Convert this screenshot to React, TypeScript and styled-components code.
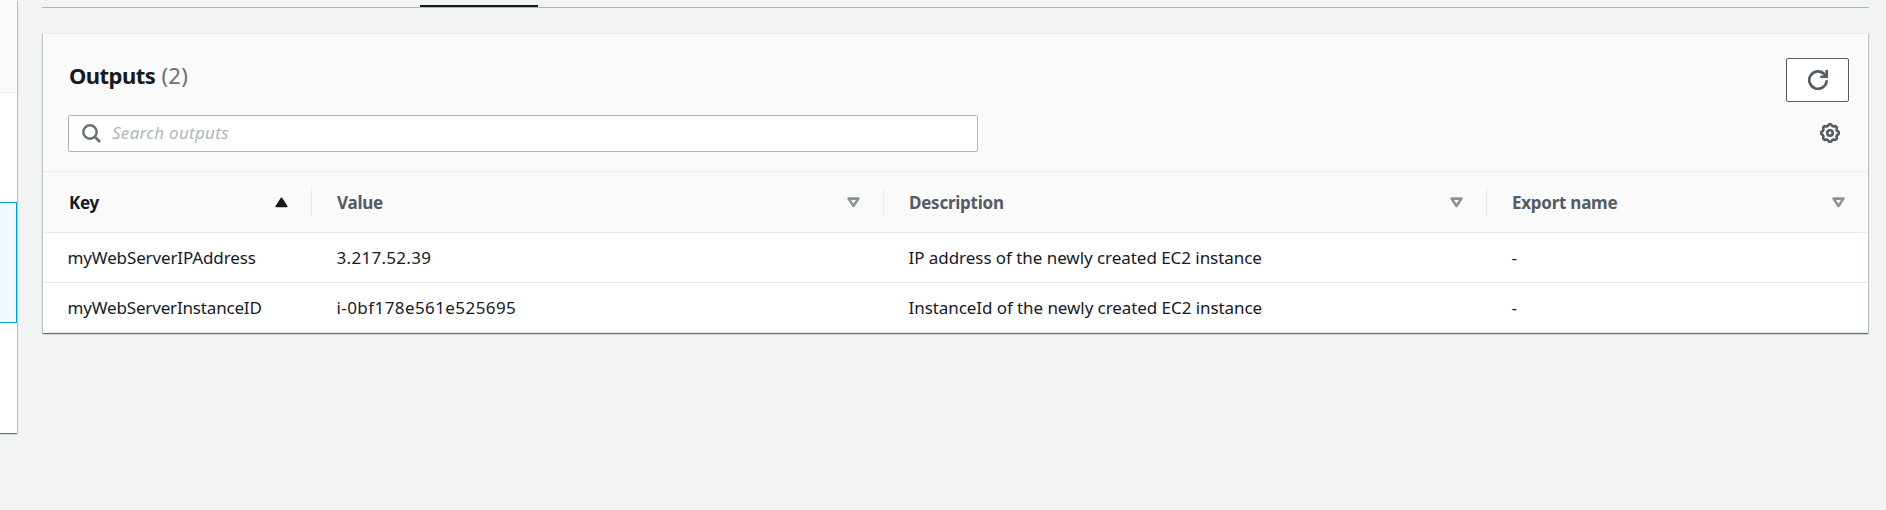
import React from 'react';
import styled, { createGlobalStyle, css } from 'styled-components';

const Global = createGlobalStyle`
  *, *::before, *::after { box-sizing: border-box; }
  body {
    margin: 0;
    background: #f2f3f3;
    color: #16191f;
    font-family: "Noto Sans", "Open Sans", sans-serif;
    font-size: 17px;
    overflow: hidden;
  }
`;

const panelShadow = css`
  box-shadow: 0 1px 1px 0 rgba(0, 28, 36, 0.4), 1px 1px 1px 0 rgba(0, 28, 36, 0.17),
    -1px 1px 1px 0 rgba(0, 28, 36, 0.17);
`;

const Page = styled.div`
  display: flex;
  height: 510px;
`;

const StackList = styled.aside`
  width: 17px;
  height: 433px;
  flex: none;
  background: #fff;
  ${panelShadow}
`;

const StackListHeader = styled.div`
  height: 93px;
  background: #fafafa;
  border-bottom: 1px solid #eaeded;
`;

const SelectedStack = styled.div`
  height: 121px;
  margin-top: 109px;
  background: #f1faff;
  border: 1px solid #00a1c9;
  border-left: 0;
`;

const Content = styled.main`
  width: 1827px;
  margin-left: 25px;
`;

const TabBar = styled.div`
  height: 8px;
  padding: 5px 0 0 378px;
  border-bottom: 1px solid #aab7b8;
`;

const ActiveTab = styled.div`
  width: 118px;
  height: 2px;
  background: #16191f;
`;

const Panel = styled.section`
  width: 1825px;
  margin: 25px 0 0 1px;
  background: #fff;
  border-top: 1px solid #eaeded;
  ${panelShadow}
`;

const PanelHeader = styled.header`
  display: flex;
  flex-direction: column;
  height: 137px;
  padding: 24px 19px 0 25px;
  background: #fafafa;
`;

const TitleRow = styled.div`
  display: flex;
  justify-content: space-between;
  height: 44px;
`;

const Title = styled.h2`
  margin: 2px 0 0 1px;
  font-size: 22px;
  line-height: 30px;
  font-weight: 700;
  letter-spacing: -0.55px;
`;

const Count = styled.span`
  margin-left: 1px;
  color: #687078;
  font-weight: 400;
  letter-spacing: 0.3px;
`;

const RefreshButton = styled.button`
  display: flex;
  align-items: center;
  justify-content: center;
  width: 63px;
  height: 44px;
  padding: 0 0 0 1px;
  color: #545b64;
  background: #fff;
  border: 1px solid #545b64;
  border-radius: 2px;
`;

const FilterRow = styled.div`
  display: flex;
  align-items: center;
  justify-content: space-between;
  margin-top: 13px;
  padding-right: 9px;
`;

const SearchBox = styled.label`
  display: flex;
  align-items: center;
  gap: 11px;
  width: 910px;
  height: 37px;
  padding-left: 13px;
  color: #687078;
  background: #fff;
  border: 1px solid #aab7b8;
  border-radius: 2px;
`;

const SearchInput = styled.input`
  flex: 1;
  padding: 0 0 2px;
  font: inherit;
  letter-spacing: 0.28px;
  border: 0;
  outline: 0;
  background: transparent;
  &::placeholder {
    color: #aab7b8;
    font-style: italic;
    opacity: 1;
  }
`;

const SettingsButton = styled.button`
  display: flex;
  padding: 0 0 1px;
  color: #545b64;
  background: none;
  border: 0;
`;

const columns = '269px 572px 603px 381px';

const HeadRow = styled.div`
  display: grid;
  grid-template-columns: ${columns};
  align-items: center;
  height: 62px;
  background: #fafafa;
  border-top: 1px solid #eaeded;
  border-bottom: 1px solid #eaeded;
`;

const HeadCell = styled.div<{ $active?: boolean; $last?: boolean }>`
  display: flex;
  align-items: center;
  justify-content: space-between;
  height: 30px;
  padding: 0 23px 0 ${(p) => (p.$active ? '26px' : '25px')};
  color: ${(p) => (p.$active ? '#16191f' : '#545b64')};
  font-weight: 700;
  letter-spacing: -0.25px;
  border-right: ${(p) => (p.$last ? '0' : '1px solid #eaeded')};
`;

const BodyRow = styled.div`
  display: grid;
  grid-template-columns: ${columns};
  height: 50px;
  align-items: center;
  border-bottom: 1px solid #eaeded;
`;

const Cell = styled.div<{ $tracking: number }>`
  padding-left: 24.5px;
  line-height: 24px;
  white-space: nowrap;
  letter-spacing: ${(p) => p.$tracking}px;
`;

const SearchIcon = () => (
  <svg width="19" height="19" viewBox="0 0 19 19" fill="none" stroke="currentColor" strokeWidth="2.5">
    <circle cx="8" cy="8" r="6.7" />
    <path d="M12.6 12.6L18 18" strokeWidth="2.8" />
  </svg>
);

const RefreshIcon = () => (
  <svg width="20" height="20" viewBox="0 0 20 20" fill="none" stroke="currentColor" strokeWidth="2.6">
    <path d="M18.7 10.2A8.7 8.7 0 1 1 16.6 4.4L18.6 6.6" />
    <path d="M18.7 0V6.7H12.3" />
  </svg>
);

const gearPath = (() => {
  const points: string[] = [];
  for (let i = 0; i <= 96; i++) {
    const a = (i / 96) * Math.PI * 2;
    const r = 8.1 + 0.75 * Math.tanh(2 * Math.cos(8 * a));
    points.push(`${(10 + r * Math.cos(a)).toFixed(2)} ${(10 + r * Math.sin(a)).toFixed(2)}`);
  }
  return `M${points.join('L')}Z`;
})();

const GearIcon = () => (
  <svg width="20" height="20" viewBox="0 0 20 20" fill="none" stroke="currentColor" strokeWidth="2.6">
    <path d={gearPath} strokeLinejoin="round" />
    <circle cx="10" cy="10" r="2.7" />
  </svg>
);

const SortIcon = ({ active }: { active?: boolean }) => (
  <svg width="13" height="11" viewBox="0 0 13 11" strokeLinejoin="round">
    {active ? (
      <path d="M6.5 1.3L11.8 9.4H1.2Z" fill="#16191f" stroke="#16191f" strokeWidth="1.6" />
    ) : (
      <path d="M1.6 1.6H11.4L6.5 9Z" fill="none" stroke="#879596" strokeWidth="2.6" />
    )}
  </svg>
);

type Value = [text: string, tracking: number];

const headings = ['Key', 'Value', 'Description', 'Export name'];

const outputs: Value[][] = [
  [
    ['myWebServerIPAddress', -0.13],
    ['3.217.52.39', 0.3],
    ['IP address of the newly created EC2 instance', -0.05],
    ['-', 0],
  ],
  [
    ['myWebServerInstanceID', -0.17],
    ['i-0bf178e561e525695', 0.42],
    ['InstanceId of the newly created EC2 instance', -0.07],
    ['-', 0],
  ],
];

export default function App() {
  return (
    <Page>
      <Global />
      <StackList>
        <StackListHeader />
        <SelectedStack />
      </StackList>
      <Content>
        <TabBar>
          <ActiveTab />
        </TabBar>
        <Panel>
          <PanelHeader>
            <TitleRow>
              <Title>
                Outputs <Count>(2)</Count>
              </Title>
              <RefreshButton aria-label="Refresh">
                <RefreshIcon />
              </RefreshButton>
            </TitleRow>
            <FilterRow>
              <SearchBox>
                <SearchIcon />
                <SearchInput placeholder="Search outputs" />
              </SearchBox>
              <SettingsButton aria-label="Settings">
                <GearIcon />
              </SettingsButton>
            </FilterRow>
          </PanelHeader>
          <HeadRow>
            {headings.map((name, i) => (
              <HeadCell key={name} $active={i === 0} $last={i === headings.length - 1}>
                {name}
                <SortIcon active={i === 0} />
              </HeadCell>
            ))}
          </HeadRow>
          {outputs.map((row) => (
            <BodyRow key={row[0][0]}>
              {row.map(([text, tracking], i) => (
                <Cell key={i} $tracking={tracking}>
                  {text}
                </Cell>
              ))}
            </BodyRow>
          ))}
        </Panel>
      </Content>
    </Page>
  );
}
